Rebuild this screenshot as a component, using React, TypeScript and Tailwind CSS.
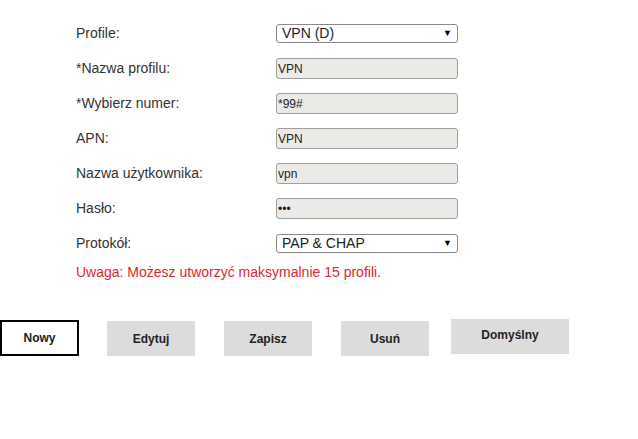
const rows: { label: string; value: string; kind: 'select' | 'input' }[] = [
  { label: 'Profile:', value: 'VPN (D)', kind: 'select' },
  { label: '*Nazwa profilu:', value: 'VPN', kind: 'input' },
  { label: '*Wybierz numer:', value: '*99#', kind: 'input' },
  { label: 'APN:', value: 'VPN', kind: 'input' },
  { label: 'Nazwa użytkownika:', value: 'vpn', kind: 'input' },
  { label: 'Hasło:', value: '•••', kind: 'input' },
  { label: 'Protokół:', value: 'PAP & CHAP', kind: 'select' },
]

const buttons = ['Edytuj', 'Zapisz', 'Usuń']

export default function App() {
  return (
    <div className="w-[638px] h-[439px] bg-white font-['Liberation_Sans',Arial,sans-serif] text-[#333]">
      <div className="pt-[16px] pl-[76px]">
        {rows.map((r) => (
          <div key={r.label} className="flex items-center h-[35px]">
            <div className="w-[200px] text-[14px]">{r.label}</div>
            {r.kind === 'select' ? (
              <div className="w-[182px] h-[19px] flex items-center justify-between border border-[#8a8a8a] rounded-[3px] bg-white pl-[5px] pr-[5px] text-[14px] text-[#222]">
                <span>{r.value}</span>
                <span className="text-[9px] text-black">▼</span>
              </div>
            ) : (
              <div className="w-[182px] h-[21px] flex items-center border border-[#a0a0a0] rounded-[3px] bg-[#ebeae6] pl-[1px] text-[12px] text-[#222]">
                {r.value}
              </div>
            )}
          </div>
        ))}
        <p className="mt-[1px] text-[14px] text-[#e0262e]">Uwaga: Możesz utworzyć maksymalnie 15 profili.</p>
      </div>

      <div className="flex items-start mt-[37px] text-[12px] font-bold text-[#222]">
        <button className="w-[79px] h-[36px] border-2 border-black bg-white">Nowy</button>
        <div className="flex gap-[29px] ml-[28px] mt-[1px]">
          {buttons.map((b) => (
            <button key={b} className="w-[88px] h-[35px] bg-[#dcdcdc]">{b}</button>
          ))}
        </div>
        <button className="ml-[22px] -mt-[1px] w-[118px] h-[35px] bg-[#dcdcdc] pb-[3px]">Domyślny</button>
      </div>
    </div>
  )
}
